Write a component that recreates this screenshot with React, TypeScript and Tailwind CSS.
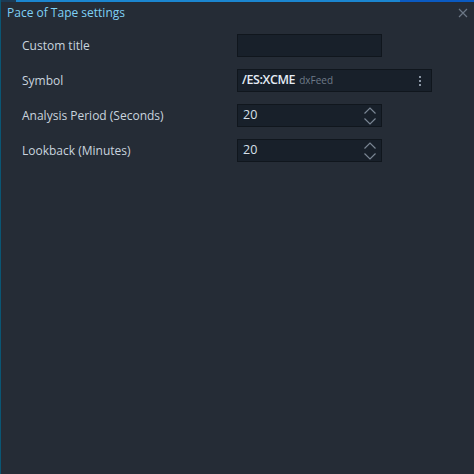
import React from "react";

function Spinner() {
  return (
    <svg width="14" height="20" viewBox="0 0 14 20" fill="none" stroke="#7a8694" strokeWidth="1.2">
      <path d="M1.5 7.5L7 2l5.5 5.5" />
      <path d="M1.5 12.5L7 18l5.5-5.5" />
    </svg>
  );
}

function NumberField({ value }: { value: string }) {
  return (
    <div className="w-[145px] h-[23px] bg-[#18202a] border border-[#10161d] flex items-center justify-between pl-[5px] pr-[4px]">
      <span className="text-[12.5px] text-[#d6e0ea]">{value}</span>
      <Spinner />
    </div>
  );
}

function Row({ label, children }: { label: string; children: React.ReactNode }) {
  return (
    <div className="flex items-center">
      <div className="w-[215px] text-[12px] text-[#c9d4df]">{label}</div>
      {children}
    </div>
  );
}

export default function App() {
  return (
    <div
      className="w-[474px] h-[474px] bg-[#252c36] border-l border-[#0a5674] flex flex-col overflow-hidden"
      style={{ fontFamily: '"Open Sans", "Noto Sans", sans-serif' }}
    >
      {/* top glow */}
      <div className="flex h-[2px] shrink-0">
        <div className="w-[15px] bg-[#1c3b55]" />
        <div className="flex-1 bg-[#1b86d0]" />
        <div className="w-[74px] bg-[#0a5ac2]" />
      </div>

      {/* header */}
      <div className="flex items-center justify-between h-[22px] pl-[6px] pr-[6px]">
        <span className="text-[12px] text-[#7fd0f5]">Pace of Tape settings</span>
        <svg width="10" height="10" viewBox="0 0 10 10" stroke="#6c7786" strokeWidth="1.2">
          <path d="M1 1l8 8M9 1L1 9" />
        </svg>
      </div>

      <div className="flex flex-col gap-[12px] pl-[21px] pt-[10px]">
        <Row label="Custom title">
          <div className="w-[145px] h-[23px] bg-[#18202a] border border-[#10161d]" />
        </Row>
        <Row label="Symbol">
          <div className="w-[195px] h-[23px] bg-[#18202a] border border-[#10161d] flex items-center justify-between pl-[4px] pr-[10px]">
            <div className="flex items-baseline gap-[4px]">
              <span className="text-[12.5px] font-semibold tracking-[-0.4px] text-[#e4ecf4]">/ES:XCME</span>
              <span className="text-[10px] text-[#6e7a88]">dxFeed</span>
            </div>
            <div className="flex flex-col gap-[2px]">
              <div className="w-[2px] h-[2px] bg-[#8a96a4]" />
              <div className="w-[2px] h-[2px] bg-[#8a96a4]" />
              <div className="w-[2px] h-[2px] bg-[#8a96a4]" />
            </div>
          </div>
        </Row>
        <Row label="Analysis Period (Seconds)">
          <NumberField value="20" />
        </Row>
        <Row label="Lookback (Minutes)">
          <NumberField value="20" />
        </Row>
      </div>
    </div>
  );
}
